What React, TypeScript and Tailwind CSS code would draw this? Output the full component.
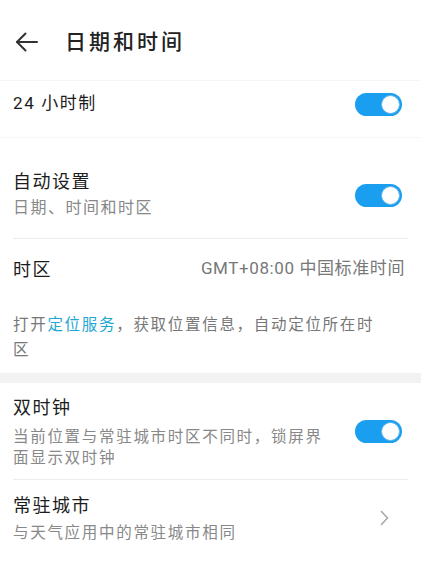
import React from "react";

const FONT = { fontFamily: "Roboto, 'Noto Sans CJK SC', sans-serif" };

function Toggle() {
  return (
    <div className="relative w-[47px] h-[23px] rounded-full bg-[#1a9ef0] shrink-0">
      <div className="absolute right-[2px] top-[2px] w-[19px] h-[19px] rounded-full bg-white border border-[#5fb6e8]" />
    </div>
  );
}

export default function App() {
  return (
    <div className="w-[421px] h-[581px] bg-white overflow-hidden text-[#1c1c1c]" style={FONT}>
      {/* Header */}
      <div className="h-[80px] flex items-center pt-[4px] pl-[15px]">
        <svg width="23" height="20" viewBox="0 0 23 20" fill="none" stroke="#333" strokeWidth="2" strokeLinecap="round" strokeLinejoin="round">
          <path d="M22 10H2" />
          <path d="M10.5 1.5L2 10l8.5 8.5" />
        </svg>
        <div className="ml-[27px] text-[21px] leading-[28px] tracking-[3px] font-medium text-[#222]">日期和时间</div>
      </div>

      {/* 24-hour card */}
      <div className="border-t border-b border-[#f6f6f6] pb-[10px]">
        <div className="h-[46px] flex items-center justify-between pl-[13px] pr-[19px]">
          <div className="text-[17px] tracking-[1.6px]">24 小时制</div>
          <Toggle />
        </div>
      </div>

      {/* Auto setting */}
      <div className="px-[13px]">
        <div className="pt-[31px] pb-[17px] flex items-center justify-between pr-[6px]">
          <div>
            <div className="text-[18px] leading-[26px] tracking-[1.5px]">自动设置</div>
            <div className="text-[16px] leading-[26px] tracking-[1.5px] text-[#888]">日期、时间和时区</div>
          </div>
          <Toggle />
        </div>
        <div className="h-px bg-[#ececec]" />
        <div className="h-[60px] flex items-center justify-between pr-[3px]">
          <div className="text-[18px] tracking-[1.5px]">时区</div>
          <div className="text-[17px] tracking-[0.6px] text-[#777]">GMT+08:00 中国标准时间</div>
        </div>
        <div className="pt-[14px] pb-[10px] text-[15.5px] leading-[25px] tracking-[1.7px] text-[#777]">
          <div className="flex">
            <span>打开</span>
            <span className="text-[#1ea6d4]">定位服务</span>
            <span>，获取位置信息，自动定位所在时</span>
          </div>
          <div>区</div>
        </div>
      </div>

      <div className="h-[10px] bg-[#f2f2f2]" />

      {/* Dual clock */}
      <div className="px-[13px]">
        <div className="pt-[11px] pb-[10px] flex items-center justify-between pr-[6px]">
          <div>
            <div className="text-[18px] leading-[28px] tracking-[1.5px]">双时钟</div>
            <div className="mt-[5px] w-[322px] text-[15.5px] leading-[21px] tracking-[1.7px] text-[#888]">
              当前位置与常驻城市时区不同时，锁屏界面显示双时钟
            </div>
          </div>
          <Toggle />
        </div>
        <div className="h-px bg-[#ececec]" />
        <div className="pt-[12px] flex items-center justify-between pr-[19px]">
          <div>
            <div className="text-[18px] leading-[28px] tracking-[1.5px]">常驻城市</div>
            <div className="mt-[2px] text-[15.5px] leading-[22px] tracking-[1.7px] text-[#888]">与天气应用中的常驻城市相同</div>
          </div>
          <svg width="9" height="16" viewBox="0 0 9 16" fill="none" stroke="#a8a8a8" strokeWidth="1.6" strokeLinecap="round" strokeLinejoin="round">
            <path d="M1.5 1.5L7.5 8l-6 6.5" />
          </svg>
        </div>
      </div>
    </div>
  );
}
